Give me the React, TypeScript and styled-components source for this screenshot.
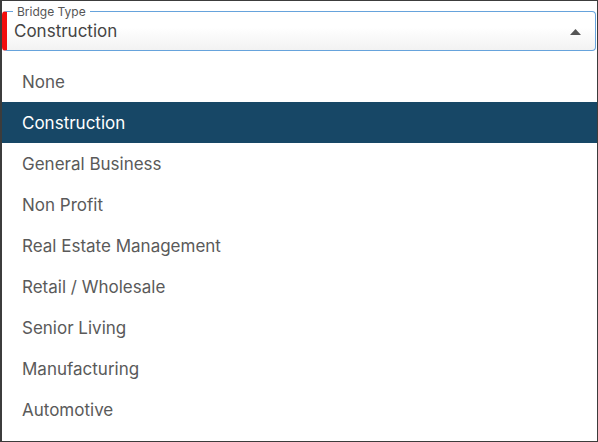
import React from "react";
import styled, { createGlobalStyle } from "styled-components";

const GlobalStyle = createGlobalStyle`
  html, body {
    margin: 0;
    padding: 0;
    background: #ffffff;
  }
  body {
    font-family: Inter, "Noto Sans", Arial, sans-serif;
  }
`;

const Frame = styled.div`
  box-sizing: border-box;
  width: 598px;
  height: 442px;
  border: 1px solid #3c3c3c;
  border-left-width: 2px;
  background: #ffffff;
  display: flex;
  flex-direction: column;
`;

const FieldWrap = styled.div`
  position: relative;
  padding: 10px 1px 0 0;
`;

const Field = styled.div`
  box-sizing: border-box;
  height: 40px;
  border: 1px solid #66a3dc;
  border-left: 5px solid #f20d0d;
  border-radius: 4px;
  background: linear-gradient(#ffffff 40%, #f2f2f2);
  display: flex;
  align-items: flex-end;
  justify-content: space-between;
  padding: 0 14px 9px 7px;
`;

const FieldLabel = styled.span`
  position: absolute;
  top: 4px;
  left: 11px;
  padding: 0 4px;
  background: #ffffff;
  font-size: 12px;
  line-height: 14px;
  color: #555555;
`;

const FieldValue = styled.span`
  font-size: 17px;
  line-height: 20px;
  color: #444444;
`;

const Caret = styled.svg`
  width: 11px;
  height: 6px;
  margin-bottom: 6px;
`;

const OptionList = styled.ul`
  list-style: none;
  margin: 10px 0 0 0;
  padding: 0;
`;

const Option = styled.li<{ $active?: boolean }>`
  box-sizing: border-box;
  height: 41px;
  display: flex;
  align-items: center;
  padding-left: 20px;
  font-size: 17px;
  color: ${(p) => (p.$active ? "#ffffff" : "#5a5a5a")};
  background: ${(p) => (p.$active ? "#174766" : "transparent")};
`;

const options = [
  "None",
  "Construction",
  "General Business",
  "Non Profit",
  "Real Estate Management",
  "Retail / Wholesale",
  "Senior Living",
  "Manufacturing",
  "Automotive",
];

export default function App() {
  const selected = "Construction";
  return (
    <>
      <GlobalStyle />
      <Frame>
        <FieldWrap>
          <FieldLabel>Bridge Type</FieldLabel>
          <Field>
            <FieldValue>{selected}</FieldValue>
            <Caret viewBox="0 0 11 6">
              <path d="M0 6 L5.5 0 L11 6 Z" fill="#555555" />
            </Caret>
          </Field>
        </FieldWrap>
        <OptionList>
          {options.map((item) => (
            <Option key={item} $active={item === selected}>
              {item}
            </Option>
          ))}
        </OptionList>
      </Frame>
    </>
  );
}
